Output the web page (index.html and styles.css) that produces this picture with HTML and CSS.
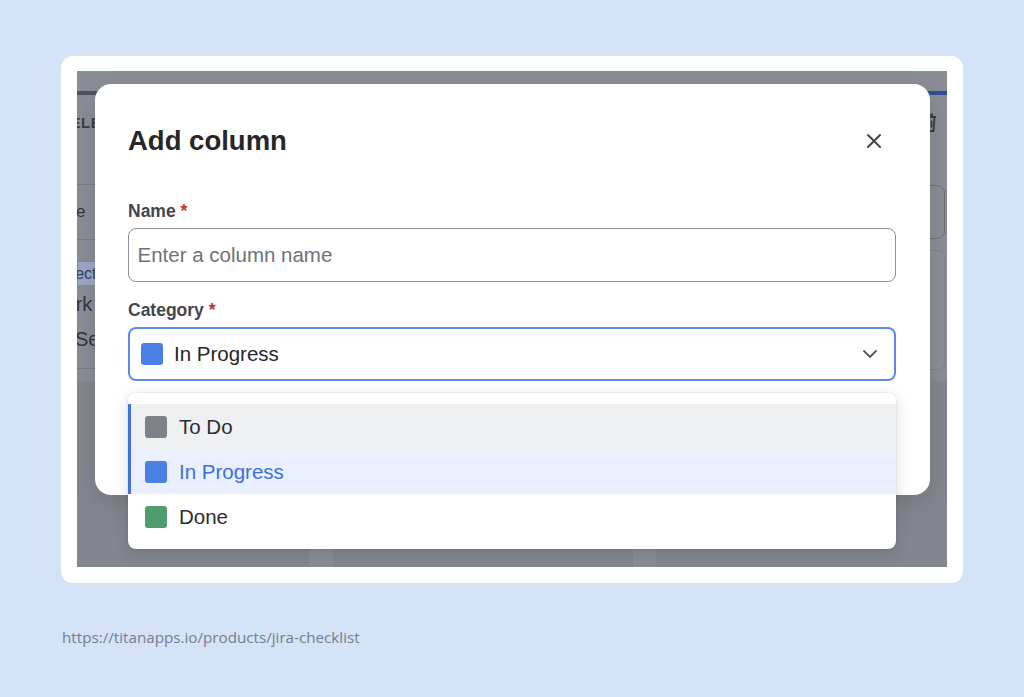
FILE: index.html
```html
<!DOCTYPE html>
<html lang="en">
<head>
    <meta charset="UTF-8">
    <meta name="viewport" content="width=device-width, initial-scale=1.0">
    <title>Add column</title>
    <link rel="stylesheet" href="styles.css">
</head>
<body>
    <div class="frame">
        <div class="shot">
            <!-- the board behind the dialog, dimmed -->
            <div class="app">
                <div class="app-top"></div>
                <div class="app-bar"></div>
                <div class="app-body">
                    <div class="side-left">
                        <div class="left-head"><span class="sel-title">SELECTED</span></div>
                        <div class="left-name"><span>Name</span></div>
                        <div class="left-chip"><span>Selected</span></div>
                        <div class="left-row row-work"><span>Work</span></div>
                        <div class="left-row row-settings"><span>Settings</span></div>
                    </div>
                    <div class="side-right">
                        <svg class="trash" width="14" height="21" viewBox="0 0 14 21" fill="none" stroke="#3b3d45" stroke-width="1.8">
                            <path d="M1 5h12M5 5V2.5h4V5M2.5 5l1 14h7l1-14M5.5 8.5v7M8.5 8.5v7"/>
                        </svg>
                        <div class="ghost-input"></div>
                        <div class="ghost-box"></div>
                    </div>
                </div>
                <div class="board">
                    <div class="board-col"></div>
                    <div class="board-col"></div>
                    <div class="board-col"></div>
                </div>
            </div>

            <div class="modal">
                <div class="modal-head">
                    <h2>Add column</h2>
                    <button class="close-btn" aria-label="Close">
                        <svg width="16" height="16" viewBox="0 0 16 16" fill="none" stroke="#45474e" stroke-width="2" stroke-linecap="round">
                            <path d="M2 2l12 12M14 2L2 14"/>
                        </svg>
                    </button>
                </div>

                <div class="field field-name">
                    <label for="colName">Name <span class="req">*</span></label>
                    <input type="text" id="colName" placeholder="Enter a column name">
                </div>

                <div class="field field-category">
                    <label>Category <span class="req">*</span></label>
                    <div class="select-wrap">
                        <div class="select-box">
                            <span class="swatch swatch-blue"></span>
                            <span class="select-value">In Progress</span>
                            <svg class="chevron" width="14" height="8" viewBox="0 0 14 8" fill="none" stroke="#55585f" stroke-width="1.8" stroke-linecap="round" stroke-linejoin="round">
                                <path d="M1 1l6 6 6-6"/>
                            </svg>
                        </div>
                        <ul class="dropdown">
                            <li class="opt opt-hover"><span class="swatch swatch-gray"></span>To Do</li>
                            <li class="opt opt-selected"><span class="swatch swatch-blue"></span>In Progress</li>
                            <li class="opt"><span class="swatch swatch-green"></span>Done</li>
                        </ul>
                    </div>
                </div>
            </div>
        </div>
    </div>

    <p class="source">https://titanapps.io/products/jira-checklist</p>
</body>
</html>
```

FILE: styles.css
```css
body {
    margin: 0;
    background-color: #d4e3f8;
    font-family: "Liberation Sans", Arial, sans-serif;
}
.frame {
    box-sizing: border-box;
    width: 902px;
    height: 527px;
    margin: 56px 0 0 61px;
    padding: 15px 16px 16px;
    background: #fff;
    border-radius: 12px;
}
.shot {
    position: relative;
    height: 100%;
    overflow: hidden;
    background: #8a8d96;
}

/* dimmed app behind the dialog */
.app {
    display: flex;
    flex-direction: column;
    height: 100%;
}
.app-top {
    height: 20px;
}
.app-bar {
    height: 4px;
    background: linear-gradient(90deg, #4f525b 50%, #2f4f98 50%);
}
.app-body {
    display: flex;
    justify-content: space-between;
    height: 286px;
}
.side-left {
    width: 240px;
    color: #33353d;
}
.left-head {
    box-sizing: border-box;
    height: 90px;
    padding-top: 18px;
    border-bottom: 1px solid #777a82;
}
.sel-title {
    display: block;
    margin-left: -17px;
    font-weight: bold;
    font-size: 15px;
    line-height: 20px;
    letter-spacing: 0.5px;
    color: #3a3c44;
}
.left-name {
    box-sizing: border-box;
    height: 55px;
    display: flex;
    align-items: center;
    border-bottom: 1px solid #777a82;
    font-size: 17px;
}
.left-name span {
    margin-left: -37px;
}
.left-chip {
    height: 25px;
    margin-top: 21px;
    display: flex;
    align-items: center;
    background: #9ba8c6;
    border: 1px solid #7489bb;
    box-sizing: border-box;
    font-size: 16px;
    color: #2d3d66;
}
.left-chip span {
    margin-left: -26px;
}
.left-row {
    display: flex;
    align-items: center;
    font-size: 20px;
}
.row-work {
    height: 36px;
}
.row-work span {
    margin-left: -31px;
}
.row-settings {
    height: 34px;
    padding-bottom: 12px;
    border-bottom: 1px solid #777a82;
}
.row-settings span {
    margin-left: -2px;
}
.side-right {
    width: 240px;
    display: flex;
    flex-direction: column;
    align-items: flex-end;
}
.trash {
    margin: 17px 10px 0 0;
}
.ghost-input {
    box-sizing: border-box;
    width: 200px;
    height: 54px;
    margin: 52px 2px 0 0;
    border: 1.5px solid #6d7079;
    border-radius: 8px;
}
.ghost-box {
    box-sizing: border-box;
    width: 200px;
    height: 120px;
    margin: 11px 2px 0 0;
    border: 1px solid #7f828b;
    border-radius: 6px;
    background: #8c8f98;
}
.board {
    flex: 1;
    display: grid;
    grid-template-columns: 233px 300px 1fr;
    gap: 23px;
}
.board-col {
    background: #83868e;
}

/* dialog */
.modal {
    position: absolute;
    left: 18px;
    top: 13px;
    box-sizing: border-box;
    width: 835px;
    height: 411px;
    padding: 35px 34px 0 33px;
    background: #fff;
    border-radius: 16px;
    box-shadow: 0 8px 24px rgba(0, 0, 0, 0.12);
}
.modal-head {
    display: flex;
    justify-content: space-between;
    align-items: center;
    height: 44px;
}
.modal-head h2 {
    margin: 0;
    font-size: 27.5px;
    line-height: 34px;
    font-weight: bold;
    color: #26272b;
}
.close-btn {
    width: 44px;
    height: 44px;
    padding: 0;
    display: flex;
    align-items: center;
    justify-content: center;
    background: none;
    border: none;
    cursor: pointer;
}
.field label {
    display: block;
    margin-bottom: 6px;
    font-size: 17.5px;
    line-height: 22px;
    font-weight: bold;
    color: #44464d;
}
.req {
    color: #b83a2e;
}
.field-name {
    margin-top: 37px;
}
.field-category {
    margin-top: 17px;
}
.field input {
    box-sizing: border-box;
    width: 100%;
    height: 54px;
    margin: 0;
    padding: 0 10px 0 8.5px;
    border: 1.5px solid #8f9198;
    border-radius: 8px;
    font-family: inherit;
    font-size: 20.5px;
    color: #26272b;
    outline: none;
}
.field input::placeholder {
    color: #6f7178;
}
.select-wrap {
    position: relative;
}
.select-box {
    box-sizing: border-box;
    height: 54px;
    display: flex;
    align-items: center;
    padding: 0 17px 0 11px;
    border: 2px solid #5a8cee;
    border-radius: 8px;
    font-size: 20.5px;
    color: #26272b;
}
.select-value {
    margin-left: 11px;
}
.chevron {
    margin-left: auto;
}
.swatch {
    width: 22px;
    height: 22px;
    flex: none;
    border-radius: 3px;
}
.swatch-blue {
    background: #4a7fe3;
}
.swatch-gray {
    background: #7f8189;
}
.swatch-green {
    background: #4f9c6c;
}
.dropdown {
    position: absolute;
    top: calc(100% + 12px);
    left: 0;
    right: 0;
    margin: 0;
    padding: 11px 0 10px;
    list-style: none;
    background: #fff;
    border-radius: 8px;
    box-shadow: 0 4px 16px rgba(20, 30, 50, 0.16), 0 0 0 1px rgba(0, 0, 0, 0.04);
}
.opt {
    display: flex;
    align-items: center;
    gap: 12px;
    height: 45px;
    padding-left: 14px;
    border-left: 3px solid transparent;
    font-size: 20.5px;
    color: #2b2d33;
}
.opt-hover {
    background: #eff0f2;
    border-left-color: #3f73dc;
}
.opt-selected {
    background: #e9effc;
    border-left-color: #3f73dc;
    color: #3a6fd9;
}

.source {
    margin: 44px 0 0 62px;
    font-family: "Open Sans", sans-serif;
    font-size: 15.2px;
    line-height: 20px;
    color: #727c92;
}
```
